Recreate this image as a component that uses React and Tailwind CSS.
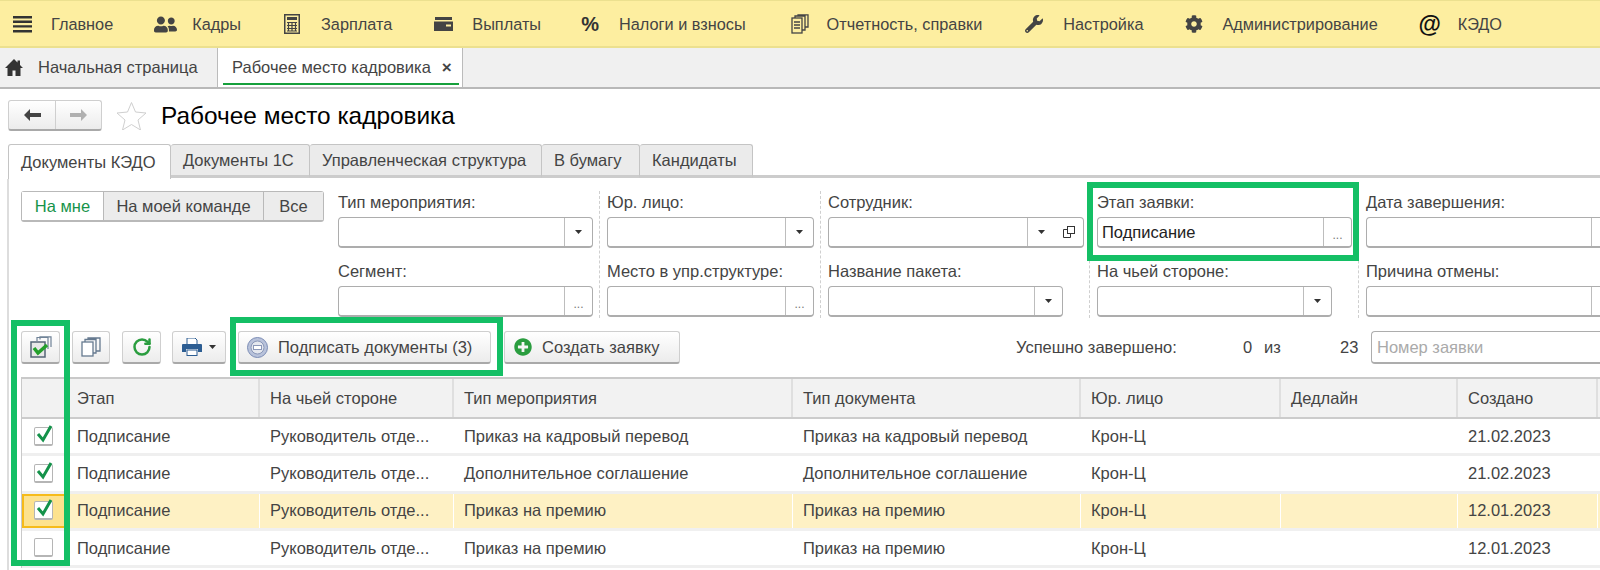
import React from 'react';
import { FaUserFriends, FaWrench, FaCog, FaPlusCircle } from 'react-icons/fa';
import { RotateCw } from 'lucide-react';

const Calc = () => (
  <svg width="16" height="20" viewBox="0 0 16 20" fill="none">
    <rect x="0.75" y="0.75" width="14.5" height="18.5" stroke="#444" strokeWidth="1.5" />
    <rect x="3" y="3" width="10" height="3" fill="#444" />
    <path d="M3 8.5h10M3 11.5h10M3 14.5h10M3 17h10M4.5 8v9.5M8 8v9.5M11.5 8v9.5" stroke="#444" strokeWidth="1.2" />
  </svg>
);

const Wallet = () => (
  <svg width="19" height="16" viewBox="0 0 19 16">
    <path d="M1 1h17v3H1z" fill="#444" />
    <path d="M0 5.5h19V15H0z" fill="#444" />
    <rect x="12" y="8.5" width="5" height="2" fill="#fdeea0" />
  </svg>
);

const Report = () => (
  <svg width="18" height="20" viewBox="0 0 18 20" fill="none" stroke="#444" strokeWidth="1.3">
    <rect x="1" y="4" width="10" height="15" />
    <path d="M4 4V2h10v14h-3M7 2V0.8h10V13h-3" />
    <path d="M3 8h6M3 11h6M3 14h6" />
  </svg>
);

const Menu = ({ icon, label, iconW, gap, mr }) => (
  <div className={`flex items-center shrink-0 ${mr}`}>
    <div className={`flex justify-center ${iconW}`}>{icon}</div>
    <span className={gap}>{label}</span>
  </div>
);

const ArrowL = ({ color }) => (
  <svg width="17" height="12" viewBox="0 0 17 12" fill={color}>
    <path d="M0 6l6-6v4h11v4H6v4z" />
  </svg>
);

const ArrowR = ({ color }) => (
  <svg width="17" height="12" viewBox="0 0 17 12" fill={color}>
    <path d="M17 6l-6-6v4H0v4h11v4z" />
  </svg>
);

const Caret = () => (
  <svg width="7" height="4" viewBox="0 0 7 4" fill="#333">
    <path d="M0 0h7L3.5 4z" />
  </svg>
);

const Tab = ({ label, w, active }) => (
  <div
    className={`${w} flex items-center pl-[12px] rounded-t-[3px] border-t border-r border-[#c4c4c4] ${
      active ? 'bg-white h-[35px] border-l' : 'bg-[#ebebeb] h-[34px] border-b-[3px] border-b-[#cccccc]'
    }`}
  >
    {label}
  </div>
);

const Btn = ({ w, children, className = '' }) => (
  <div
    className={`${w} ${className} shrink-0 h-[33px] flex items-center rounded-[3px] border border-[#cfcfcf] border-b-2 border-b-[#a9a9a9] bg-gradient-to-b from-white to-[#ececec]`}
  >
    {children}
  </div>
);

const Input = ({ w, value, buttons = [] }) => (
  <div className={`${w} h-[31px] flex rounded-[4px] border border-[#adadad] border-b-2 bg-white`}>
    <div className="flex-1 flex items-center pl-[4px] text-[#222]">{value}</div>
    {buttons.map((b, i) => (
      <div key={i} className={`flex items-center justify-center ${b.w} ${b.noLine ? '' : 'border-l border-[#bdbdbd]'}`}>
        {b.el}
      </div>
    ))}
  </div>
);

const drop = { w: 'w-[28px]', el: <Caret /> };
const dots = { w: 'w-[28px]', el: <span className="text-[#777] text-[12px] pt-[6px]">...</span> };
const copy = {
  w: 'w-[28px]',
  noLine: true,
  el: (
    <svg width="14" height="14" viewBox="0 0 14 14" fill="none" stroke="#333">
      <rect x="5.5" y="1.5" width="7" height="7" />
      <path d="M5 4.5H1.5v8h7V9" />
    </svg>
  ),
};

const Field = ({ label, value, w, buttons }) => (
  <div>
    <div className="h-[26px] flex items-center pb-[4px]">{label}</div>
    <Input w={w} value={value} buttons={buttons} />
  </div>
);

const Column = ({ w, top, bottom, last }) => (
  <div className={`${w} ${last ? '' : 'border-r border-dashed border-[#cfcfcf] mr-[7px]'} shrink-0 h-[127px]`}>
    {top}
    <div className="h-[38px] flex items-end pb-[2px]">{bottom.label}</div>
    <Input w={bottom.w} buttons={bottom.buttons} />
  </div>
);

const cols = [
  'w-[45px]',
  'w-[193px]',
  'w-[194px]',
  'w-[339px]',
  'w-[288px]',
  'w-[200px]',
  'w-[177px]',
  'w-[140px]',
];

const head = ['', 'Этап', 'На чьей стороне', 'Тип мероприятия', 'Тип документа', 'Юр. лицо', 'Дедлайн', 'Создано'];

const rows = [
  { checked: true, type: 'Приказ на кадровый перевод', date: '21.02.2023' },
  { checked: true, type: 'Дополнительное соглашение', date: '21.02.2023' },
  { checked: true, type: 'Приказ на премию', date: '12.01.2023', active: true },
  { checked: false, type: 'Приказ на премию', date: '12.01.2023' },
];

const Check = ({ checked }) => (
  <div className="relative w-[19px] h-[19px] rounded-[2px] border border-[#b5b5b5] border-b-2 bg-white">
    {checked && (
      <svg className="absolute left-[1px] top-[-3px]" width="17" height="18" viewBox="0 0 17 18" fill="none">
        <path d="M2 9l5 6 8-14" stroke="#14924a" strokeWidth="3" />
      </svg>
    )}
  </div>
);

const Row = ({ row }) => {
  const cells = ['Подписание', 'Руководитель отде...', row.type, row.type, 'Крон-Ц', '', row.date];
  return (
    <div className={`flex h-[37.25px] border-b-[3px] ${row.active ? 'border-[#f0f0f0]' : 'border-[#efefef]'}`}>
      <div
        className={`${cols[0]} shrink-0 flex items-center justify-center pr-[2px] ${
          row.active ? 'bg-[#fde28e] border-2 border-[#f6bb1a]' : ''
        }`}
      >
        <Check checked={row.checked} />
      </div>
      {cells.map((c, i) => (
        <div
          key={i}
          className={`${cols[i + 1]} shrink-0 flex items-center pl-[10px] ${
            row.active ? 'bg-[#fef1c4] border-r border-white' : ''
          }`}
        >
          {c}
        </div>
      ))}
      <div className={`flex-1 ${row.active ? 'bg-[#fef1c4]' : ''}`} />
    </div>
  );
};

export default function App() {
  return (
    <div className="relative w-[1600px] h-[570px] overflow-hidden bg-white text-[16.5px] text-[#444] font-['Liberation_Sans',Arial,sans-serif]">
      {/* top menu */}
      <div className="h-[48px] flex items-center pl-[13px] pt-[1px] bg-[#fdeea0] border-t border-b-2 border-[#ece08f] text-[16.3px]">
        <Menu
          mr="mr-[41px]"
          iconW="w-[19px]"
          gap="ml-[19px]"
          label="Главное"
          icon={
            <svg width="19" height="17" viewBox="0 0 19 17" fill="#333">
              <path d="M0 0h19v2.4H0zM0 4.6h19V7H0zM0 9.2h19v2.4H0zM0 14h19v2.4H0z" />
            </svg>
          }
        />
        <Menu mr="mr-[43px]" iconW="w-[23px]" gap="ml-[15px]" label="Кадры" icon={<FaUserFriends size={23} color="#444" />} />
        <Menu mr="mr-[42px]" iconW="w-[16px]" gap="ml-[21px]" label="Зарплата" icon={<Calc />} />
        <Menu mr="mr-[40px]" iconW="w-[19px]" gap="ml-[19px]" label="Выплаты" icon={<Wallet />} />
        <Menu
          mr="mr-[45px]"
          iconW="w-[18px]"
          gap="ml-[20px]"
          label="Налоги и взносы"
          icon={<span className="font-bold text-[20px] text-[#333]">%</span>}
        />
        <Menu mr="mr-[42px]" iconW="w-[18px]" gap="ml-[18px]" label="Отчетность, справки" icon={<Report />} />
        <Menu mr="mr-[42px]" iconW="w-[20px]" gap="ml-[19px]" label="Настройка" icon={<FaWrench size={18} color="#444" />} />
        <Menu mr="mr-[41px]" iconW="w-[18px]" gap="ml-[19px]" label="Администрирование" icon={<FaCog size={18} color="#444" />} />
        <Menu
          mr=""
          iconW="w-[22px]"
          gap="ml-[17px]"
          label="КЭДО"
          icon={<span className="font-bold text-[23px] leading-none text-[#111]">@</span>}
        />
      </div>

      {/* open pages */}
      <div className="h-[41px] flex bg-[#f0f0f0] border-b-2 border-[#b8b8b8]">
        <div className="w-[218px] flex items-center pl-[5px] border-r border-[#bbbbbb]">
          <svg width="18" height="17" viewBox="0 0 18 17" fill="#333">
            <path d="M9 0L0 9h2.500v8h5v-5.500h3V17h5V9H18l-3-3V1.500h-2.500V3.500z" />
          </svg>
          <span className="ml-[15px]">Начальная страница</span>
        </div>
        <div className="relative w-[245px] flex items-center pl-[14px] bg-white border-r border-[#bbbbbb]">
          <span className="whitespace-nowrap">Рабочее место кадровика</span>
          <span className="ml-[11px] font-bold text-[17px] leading-none">×</span>
          <div className="absolute left-[5px] right-[3px] bottom-[2px] h-[2px] bg-[#16a03c]" />
        </div>
      </div>

      {/* title */}
      <div className="flex items-center h-[31px] mt-[11px] ml-[8px]">
        <div className="w-[94px] h-[31px] flex rounded-[3px] border border-[#cfcfcf] border-b-2 border-b-[#a9a9a9] bg-gradient-to-b from-white to-[#ececec]">
          <div className="w-[47px] flex items-center justify-center border-r border-[#cfcfcf]">
            <ArrowL color="#444" />
          </div>
          <div className="flex-1 flex items-center justify-center">
            <ArrowR color="#b0b0b0" />
          </div>
        </div>
        <svg className="ml-[14px]" width="31" height="29" viewBox="0 0 31 29" fill="none" stroke="#cfcfcf">
          <path d="M15.5 1.5l4 9.5 10.5 1-8 7 2.5 10-9-5.500-9 5.500 2.500-10-8-7 10.500-1z" />
        </svg>
        <h1 className="ml-[14px] pt-[1px] text-[24.4px] text-black font-normal">Рабочее место кадровика</h1>
      </div>

      {/* tabs */}
      <div className="flex items-start mt-[13px] ml-[8px] h-[35px]">
        <Tab label="Документы КЭДО" w="w-[163px]" active />
        <Tab label="Документы 1С" w="w-[139px]" />
        <Tab label="Управленческая структура" w="w-[232px]" />
        <Tab label="В бумагу" w="w-[98px]" />
        <Tab label="Кандидаты" w="w-[113px]" />
        <div className="flex-1 h-[34px] border-b-[3px] border-[#cccccc]" />
      </div>

      <div className="ml-[7px] h-[400px] border-l-2 border-[#dddddd] pl-[12px]">
        {/* filters */}
        <div className="flex pt-[12px]">
          <div className="w-[317px] shrink-0">
            <div className="w-[303px] h-[31px] flex rounded-[3px] border border-[#b9b9b9] border-b-2">
              <div className="w-[81px] flex items-center justify-center bg-white text-[#16934a]">На мне</div>
              <div className="w-[161px] flex items-center justify-center bg-[#ececec] border-x border-[#b9b9b9]">На моей команде</div>
              <div className="flex-1 flex items-center justify-center bg-[#ececec]">Все</div>
            </div>
          </div>
          <Column
            w="w-[262px]"
            top={<Field label="Тип мероприятия:" w="w-[255px]" buttons={[drop]} />}
            bottom={{ label: 'Сегмент:', w: 'w-[255px]', buttons: [dots] }}
          />
          <Column
            w="w-[214px]"
            top={<Field label="Юр. лицо:" w="w-[207px]" buttons={[drop]} />}
            bottom={{ label: 'Место в упр.структуре:', w: 'w-[207px]', buttons: [dots] }}
          />
          <Column
            w="w-[262px]"
            top={<Field label="Сотрудник:" w="w-[256px]" buttons={[drop, copy]} />}
            bottom={{ label: 'Название пакета:', w: 'w-[235px]', buttons: [drop] }}
          />
          <Column
            w="w-[262px]"
            top={<Field label="Этап заявки:" value="Подписание" w="w-[255px]" buttons={[dots]} />}
            bottom={{ label: 'На чьей стороне:', w: 'w-[235px]', buttons: [drop] }}
          />
          <Column
            last
            w="w-[262px]"
            top={<Field label="Дата завершения:" w="w-[254px]" buttons={[dots]} />}
            bottom={{ label: 'Причина отмены:', w: 'w-[254px]', buttons: [dots] }}
          />
        </div>

        {/* toolbar */}
        <div className="flex items-center mt-[13px]">
          <Btn w="w-[39px]" className="justify-center">
            <svg width="24" height="22" viewBox="0 0 24 22" fill="none">
              <path d="M8 5V1.500h11V13M11 3.500V0.800h11V11" stroke="#6f8297" strokeWidth="1.2" />
              <rect x="2" y="6" width="14" height="15" fill="#e8e8e8" stroke="#567" strokeWidth="1.500" />
              <path d="M5 12l4 5 9-8" stroke="#24a02c" strokeWidth="3.500" />
            </svg>
          </Btn>
          <Btn w="w-[38px]" className="justify-center ml-[12px]">
            <svg width="20" height="20" viewBox="0 0 20 20" fill="none" stroke="#667a90" strokeWidth="1.300">
              <rect x="1" y="5" width="11" height="14" fill="#fff" />
              <path d="M4 5V2.500h11V16h-3M7 2.500V1h12v13h-4" />
            </svg>
          </Btn>
          <Btn w="w-[39px]" className="justify-center ml-[12px]">
            <RotateCw size={20} color="#2a9d3f" strokeWidth={3} />
          </Btn>
          <Btn w="w-[54px]" className="justify-center gap-[7px] ml-[11px]">
            <svg width="20" height="18" viewBox="0 0 20 18">
              <path d="M5 0h8l2 2v5H5z" fill="#fff" stroke="#2c5d92" />
              <path d="M1 6h18a1 1 0 011 1v7h-4v-3H4v3H0V7a1 1 0 011-1z" fill="#2c5d92" />
              <rect x="5" y="12" width="10" height="5.500" fill="#fff" stroke="#2c5d92" />
            </svg>
            <Caret />
          </Btn>
          <Btn w="w-[253px]" className="ml-[12px] pl-[8px]">
            <svg width="21" height="21" viewBox="0 0 21 21">
              <circle cx="10.500" cy="10.500" r="10" fill="#b8c2da" stroke="#7b8cb5" />
              <circle cx="10.500" cy="10.500" r="6.500" fill="#e4e7ee" stroke="#8a97b8" />
              <rect x="6.500" y="8.500" width="8" height="4" fill="#fff" stroke="#8a97b8" />
            </svg>
            <span className="ml-[10px] whitespace-nowrap">Подписать документы (3)</span>
          </Btn>
          <Btn w="w-[176px]" className="ml-[13px] pl-[9px]">
            <FaPlusCircle size={18} color="#2a9d3f" />
            <span className="ml-[10px] whitespace-nowrap">Создать заявку</span>
          </Btn>
          <span className="ml-[336px] w-[227px] shrink-0 whitespace-nowrap">Успешно завершено:</span>
          <span className="w-[21px] shrink-0">0</span>
          <span className="w-[76px] shrink-0">из</span>
          <span className="w-[18px] shrink-0">23</span>
          <div className="ml-[13px] flex-1 h-[33px] flex items-center pl-[5px] rounded-l-[4px] border border-r-0 border-[#adadad] border-b-2 text-[#aaaaaa] whitespace-nowrap">
            Номер заявки
          </div>
        </div>

        {/* table */}
        <div className="mt-[13px] border-l border-t-2 border-[#c9c9c9]">
          <div className="flex h-[40px] bg-[#f2f2f2] border-b-2 border-[#cccccc]">
            {head.map((h, i) => (
              <div key={i} className={`${cols[i]} shrink-0 flex items-center pl-[10px] border-r-2 border-[#dfdfdf]`}>
                {h}
              </div>
            ))}
            <div className="flex-1" />
          </div>
          {rows.map((r, i) => (
            <Row key={i} row={r} />
          ))}
        </div>
      </div>

      {/* green highlight frames */}
      <div className="absolute left-[11px] top-[320px] w-[59px] h-[246px] border-[6px] border-[#14bf65]" />
      <div className="absolute left-[230px] top-[317px] w-[273px] h-[59px] border-[6px] border-[#14bf65]" />
      <div className="absolute left-[1087px] top-[182px] w-[272px] h-[79px] border-[6px] border-[#14bf65]" />
    </div>
  );
}
